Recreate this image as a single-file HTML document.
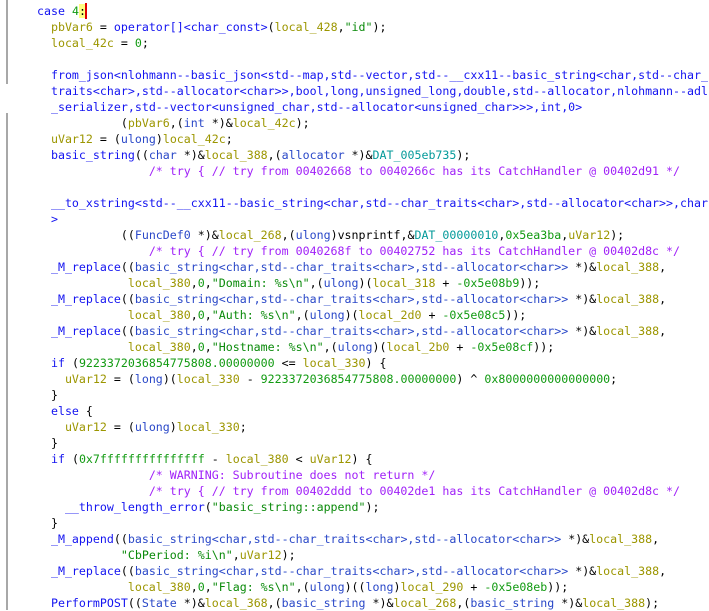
<!DOCTYPE html>
<html><head><meta charset="utf-8"><style>
html,body{margin:0;padding:0;background:#fff;width:709px;height:610px;overflow:hidden;}
pre{position:absolute;left:23px;top:3px;margin:0;font-family:"DejaVu Sans Mono","Liberation Mono",monospace;font-size:11.62px;line-height:16px;color:#000;white-space:pre;}
.f{color:#1414f0}.t{color:#2a48c8}.v{color:#9c9600}.n{color:#119a11}.s{color:#0a8a0a}.c{color:#a020f8}.d{color:#049a9a}
.bar{position:absolute;left:6px;width:2px;background:#a8a8a8;}
.hl{background:#ffff80}
.cur{display:inline-block;width:2px;height:16px;background:#e00000;vertical-align:top;margin-left:-1px}
</style></head><body>
<div class="bar" style="top:0;height:84px"></div>
<div class="bar" style="top:113px;height:497px"></div>
<pre>  <span class="f">case</span> <span class="n">4</span><span class="hl">:</span><span class="cur"></span>
    <span class="v">pbVar6</span> = <span class="f">operator[]&lt;char_const&gt;</span>(<span class="v">local_428</span>,<span class="s">"id"</span>);
    <span class="v">local_42c</span> = <span class="n">0</span>;

    <span class="f">from_json&lt;nlohmann--basic_json&lt;std--map,std--vector,std--__cxx11--basic_string&lt;char,std--char_</span>
    <span class="f">traits&lt;char&gt;,std--allocator&lt;char&gt;&gt;,bool,long,unsigned_long,double,std--allocator,nlohmann--adl</span>
    <span class="f">_serializer,std--vector&lt;unsigned_char,std--allocator&lt;unsigned_char&gt;&gt;&gt;,int,0&gt;</span>
              (<span class="v">pbVar6</span>,(<span class="t">int</span> *)&amp;<span class="v">local_42c</span>);
    <span class="v">uVar12</span> = (<span class="t">ulong</span>)<span class="v">local_42c</span>;
    <span class="f">basic_string</span>((<span class="t">char</span> *)&amp;<span class="v">local_388</span>,(<span class="t">allocator</span> *)&amp;<span class="d">DAT_005eb735</span>);
                  <span class="c">/* try { // try from 00402668 to 0040266c has its CatchHandler @ 00402d91 */</span>

    <span class="f">__to_xstring&lt;std--__cxx11--basic_string&lt;char,std--char_traits&lt;char&gt;,std--allocator&lt;char&gt;&gt;,char</span>
    <span class="f">&gt;</span>
              ((<span class="t">FuncDef0</span> *)&amp;<span class="v">local_268</span>,(<span class="t">ulong</span>)vsnprintf,&amp;<span class="d">DAT_00000010</span>,<span class="n">0x5ea3ba</span>,<span class="v">uVar12</span>);
                  <span class="c">/* try { // try from 0040268f to 00402752 has its CatchHandler @ 00402d8c */</span>
    <span class="f">_M_replace</span>((<span class="t">basic_string&lt;char,std--char_traits&lt;char&gt;,std--allocator&lt;char&gt;&gt;</span> *)&amp;<span class="v">local_388</span>,
               <span class="v">local_380</span>,<span class="n">0</span>,<span class="s">"Domain: %s\n"</span>,(<span class="t">ulong</span>)(<span class="v">local_318</span> + <span class="n">-0x5e08b9</span>));
    <span class="f">_M_replace</span>((<span class="t">basic_string&lt;char,std--char_traits&lt;char&gt;,std--allocator&lt;char&gt;&gt;</span> *)&amp;<span class="v">local_388</span>,
               <span class="v">local_380</span>,<span class="n">0</span>,<span class="s">"Auth: %s\n"</span>,(<span class="t">ulong</span>)(<span class="v">local_2d0</span> + <span class="n">-0x5e08c5</span>));
    <span class="f">_M_replace</span>((<span class="t">basic_string&lt;char,std--char_traits&lt;char&gt;,std--allocator&lt;char&gt;&gt;</span> *)&amp;<span class="v">local_388</span>,
               <span class="v">local_380</span>,<span class="n">0</span>,<span class="s">"Hostname: %s\n"</span>,(<span class="t">ulong</span>)(<span class="v">local_2b0</span> + <span class="n">-0x5e08cf</span>));
    <span class="f">if</span> (<span class="n">9223372036854775808.00000000</span> &lt;= <span class="v">local_330</span>) {
      <span class="v">uVar12</span> = (<span class="t">long</span>)(<span class="v">local_330</span> - <span class="n">9223372036854775808.00000000</span>) ^ <span class="n">0x8000000000000000</span>;
    }
    <span class="f">else</span> {
      <span class="v">uVar12</span> = (<span class="t">ulong</span>)<span class="v">local_330</span>;
    }
    <span class="f">if</span> (<span class="n">0x7fffffffffffffff</span> - <span class="v">local_380</span> &lt; <span class="v">uVar12</span>) {
                  <span class="c">/* WARNING: Subroutine does not return */</span>
                  <span class="c">/* try { // try from 00402ddd to 00402de1 has its CatchHandler @ 00402d8c */</span>
      <span class="f">__throw_length_error</span>(<span class="s">"basic_string::append"</span>);
    }
    <span class="f">_M_append</span>((<span class="t">basic_string&lt;char,std--char_traits&lt;char&gt;,std--allocator&lt;char&gt;&gt;</span> *)&amp;<span class="v">local_388</span>,
              <span class="s">"CbPeriod: %i\n"</span>,<span class="v">uVar12</span>);
    <span class="f">_M_replace</span>((<span class="t">basic_string&lt;char,std--char_traits&lt;char&gt;,std--allocator&lt;char&gt;&gt;</span> *)&amp;<span class="v">local_388</span>,
               <span class="v">local_380</span>,<span class="n">0</span>,<span class="s">"Flag: %s\n"</span>,(<span class="t">ulong</span>)((<span class="t">long</span>)<span class="v">local_290</span> + <span class="n">-0x5e08eb</span>));
    <span class="f">PerformPOST</span>((<span class="t">State</span> *)&amp;<span class="v">local_368</span>,(<span class="t">basic_string</span> *)&amp;<span class="v">local_268</span>,(<span class="t">basic_string</span> *)&amp;<span class="v">local_388</span>);
</pre>
</body></html>
